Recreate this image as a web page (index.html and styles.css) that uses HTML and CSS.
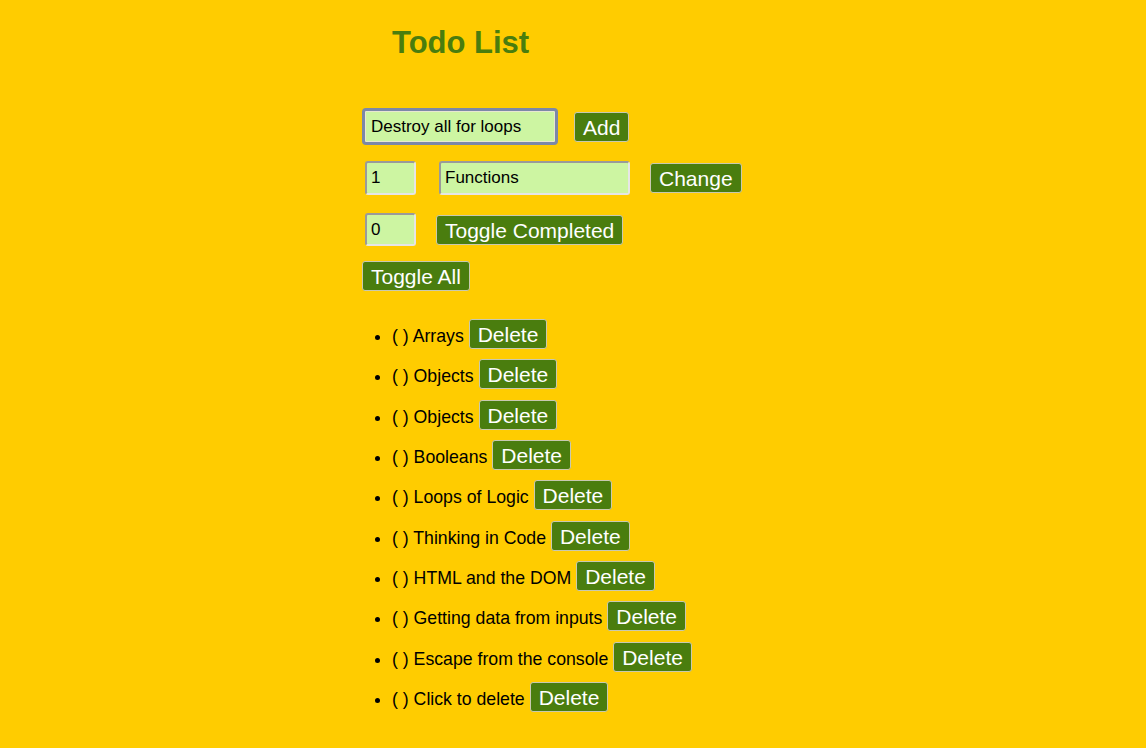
FILE: index.html
```html
<!DOCTYPE html>
<html lang="en">
<head>
<meta charset="utf-8">
<title>Todo List</title>
<link rel="stylesheet" href="styles.css">
</head>
<body>
<div class="app">
  <h1 class="title">Todo List</h1>
  <div class="row row-add">
    <input class="field field-wide focused" type="text" value="Destroy all for loops">
    <button class="btn">Add</button>
  </div>
  <div class="row row-change">
    <input class="field field-num" type="text" value="1">
    <input class="field field-name" type="text" value="Functions">
    <button class="btn">Change</button>
  </div>
  <div class="row row-toggle">
    <input class="field field-num" type="text" value="0">
    <button class="btn">Toggle Completed</button>
  </div>
  <div class="row row-all">
    <button class="btn">Toggle All</button>
  </div>
  <ul class="todos">
    <li>( ) Arrays <button class="btn">Delete</button></li>
    <li>( ) Objects <button class="btn">Delete</button></li>
    <li>( ) Objects <button class="btn">Delete</button></li>
    <li>( ) Booleans <button class="btn">Delete</button></li>
    <li>( ) Loops of Logic <button class="btn">Delete</button></li>
    <li>( ) Thinking in Code <button class="btn">Delete</button></li>
    <li>( ) HTML and the DOM <button class="btn">Delete</button></li>
    <li>( ) Getting data from inputs <button class="btn">Delete</button></li>
    <li>( ) Escape from the console <button class="btn">Delete</button></li>
    <li>( ) Click to delete <button class="btn">Delete</button></li>
  </ul>
</div>
</body>
</html>
```

FILE: styles.css
```css
html, body {
  margin: 0;
  padding: 0;
  background: #ffcc00;
}

body {
  font-family: "Liberation Sans", Arial, Helvetica, sans-serif;
  font-size: 17.7px;
  color: #000;
}

.app {
  width: 422px;
  margin: 0 auto;
}

.title {
  margin: 25px 0 0 30px;
  font-size: 31px;
  line-height: 36px;
  font-weight: bold;
  color: #4a7d0e;
}

.row {
  display: flex;
  align-items: center;
}

.row-add {
  margin-top: 47px;
  height: 37px;
  gap: 16px;
}

.row-change {
  margin-top: 16px;
  height: 34px;
  padding-left: 3px;
}

.row-toggle {
  margin-top: 18px;
  height: 33px;
  padding-left: 3px;
  gap: 20px;
}

.row-all {
  margin-top: 15px;
  height: 30px;
}

.field {
  box-sizing: border-box;
  font-family: "Liberation Sans", Arial, Helvetica, sans-serif;
  font-size: 17px;
  color: #000;
  background: #cdf5a2;
  border: 2px solid;
  border-color: #9a9a9a #e6e6e6 #e6e6e6 #9a9a9a;
  border-radius: 3px;
  padding: 0 4px;
  margin: 0;
  outline: none;
}

.field-wide {
  width: 196px;
  height: 37px;
}

.focused {
  border: 3px solid #7c88a8;
  border-radius: 4px;
  padding: 0 4px 0 6px;
  box-shadow: inset 0 0 0 1px #e8e8d0;
}

.field-num {
  width: 51px;
  height: 34px;
}

.row-toggle .field-num {
  height: 33px;
}

.field-name {
  width: 191px;
  height: 34px;
  margin-left: 23px;
  margin-right: 20px;
}

.btn {
  box-sizing: border-box;
  height: 30px;
  font-family: "Liberation Sans", Arial, Helvetica, sans-serif;
  font-size: 21px;
  line-height: 22px;
  color: #fff;
  background: #4a7d0e;
  border: 1px solid #c9c9b0;
  border-radius: 3px;
  padding: 4px 8px 2px;
  margin: 0;
  cursor: pointer;
}

.todos {
  margin: 23px 0 0;
  padding-left: 30px;
}

.todos li {
  padding: 5.16px 0;
}

.todos li .btn {
  vertical-align: baseline;
}
```
